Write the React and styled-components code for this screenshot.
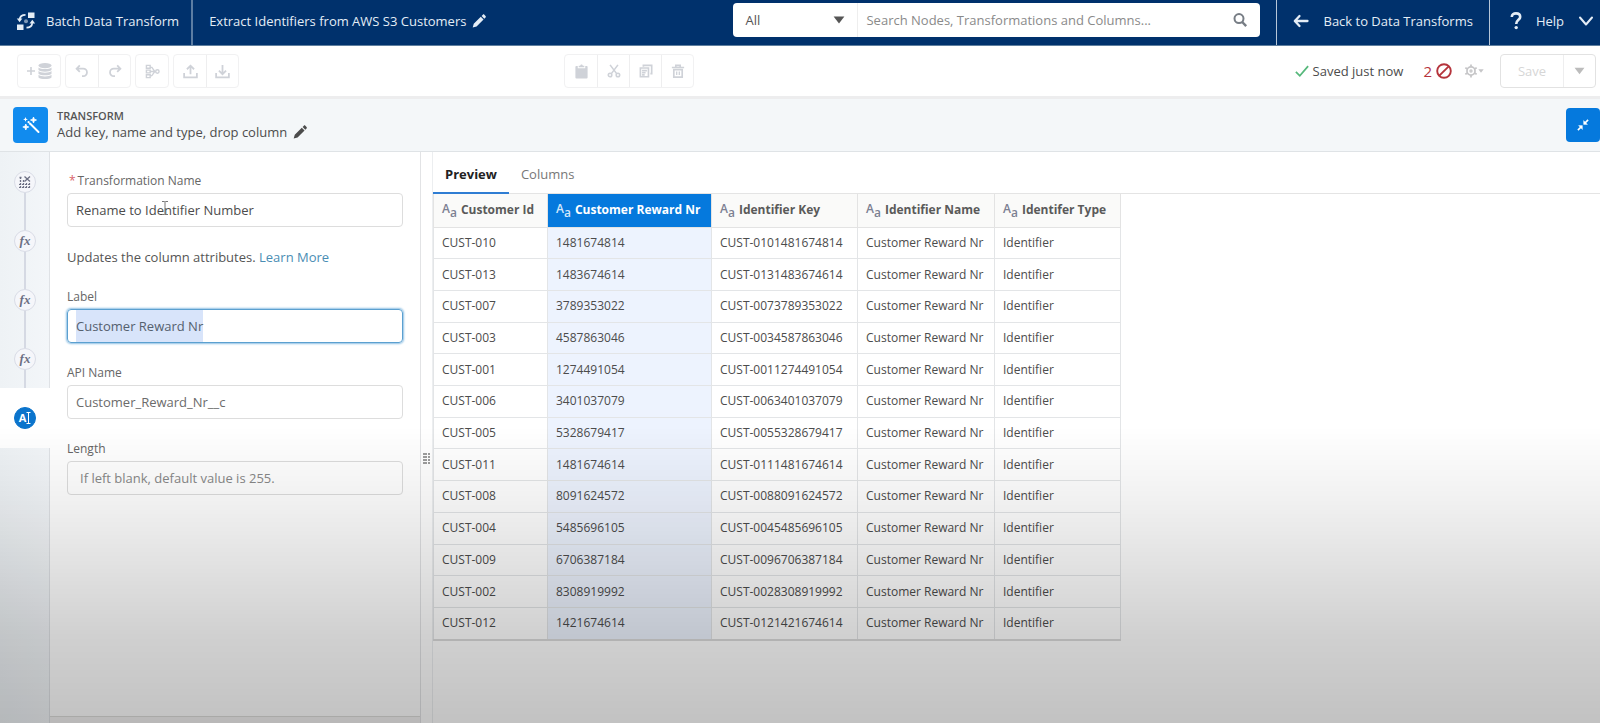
import { useEffect, useRef } from 'react';
import styled, { createGlobalStyle, css } from 'styled-components';

const GlobalStyle = createGlobalStyle`
  * {
    box-sizing: border-box;
  }

  body {
    margin: 0;
    background: #ffffff;
    color: #4c4c4c;
    font-family: 'Open Sans', 'Noto Sans', sans-serif;
    font-size: 13px;
    line-height: 20px;
  }

  button,
  input,
  select {
    font: inherit;
    color: inherit;
  }
`;

const Page = styled.div`
  display: flex;
  flex-direction: column;
  height: 100vh;
  overflow: hidden;
`;

const Shade = styled.div`
  position: fixed;
  inset: 0;
  pointer-events: none;
  background: linear-gradient(
    to bottom,
    rgba(0, 0, 0, 0) 59%,
    rgba(0, 0, 0, 0.055) 69%,
    rgba(0, 0, 0, 0.12) 79%,
    rgba(0, 0, 0, 0.185) 88%,
    rgba(0, 0, 0, 0.24) 100%
  );
`;

/* Header */

const Header = styled.header`
  display: flex;
  flex: none;
  height: 46px;
  background: #00316c;
  border-bottom: 1px solid #5f7f9f;
  color: #e4edf6;
`;

const Brand = styled.div`
  display: flex;
  align-items: center;
  gap: 10px;
  padding: 0 12px 3px 16px;
  border-right: 2px solid #5c7da3;
`;

const DocumentTitle = styled.div`
  display: flex;
  flex: 1;
  align-items: center;
  gap: 6px;
  padding: 0 16px 3px;
`;

const SearchBox = styled.form`
  display: flex;
  align-items: center;
  width: 527px;
  height: 34px;
  margin: 3px 16px 0 0;
  background: #ffffff;
  border-radius: 4px;
  color: #555555;
`;

const ScopeField = styled.label`
  display: flex;
  align-items: center;
  width: 125px;
  height: 34px;
  padding: 0 12px;
  border-right: 1px solid #eeeeee;
`;

const ScopeSelect = styled.select`
  flex: 1;
  padding: 0;
  border: none;
  background: none;
  appearance: none;
  outline: none;
`;

const SearchInput = styled.input`
  flex: 1;
  padding: 0 8px;
  border: none;
  background: none;
  outline: none;

  &::placeholder {
    color: #8a8a8a;
  }
`;

const SearchButton = styled.button`
  display: flex;
  padding: 0 12px;
  border: none;
  background: none;
  color: #777d85;
`;

const HeaderLink = styled.a`
  display: flex;
  align-items: center;
  gap: 14px;
  padding: 0 16px 3px;
  border-left: 1px solid #b6c6d8;
  color: inherit;
  text-decoration: none;
`;

const HelpButton = styled.button`
  display: flex;
  align-items: center;
  gap: 14px;
  padding: 0 6px 3px 20px;
  border: none;
  border-left: 1px solid #b6c6d8;
  background: none;
`;

/* Toolbar */

const Toolbar = styled.div`
  display: grid;
  grid-template-columns: 564px 1fr auto;
  align-items: center;
  flex: none;
  height: 50px;
  padding-right: 4px;
`;

const ToolGroups = styled.div`
  display: flex;
  gap: 4px;
  padding-left: 17px;
`;

const ButtonGroup = styled.div`
  display: flex;
  width: max-content;
  border: 1px solid #f1f1f2;
  border-radius: 4px;
`;

const ToolButton = styled.button`
  display: flex;
  align-items: center;
  justify-content: center;
  width: ${({ $wide }) => ($wide ? '42px' : '32px')};
  height: 32px;
  padding: 0;
  border: none;
  background: none;
  color: #cfd2d8;

  & + & {
    border-left: 1px solid #eeeeef;
  }
`;

const Status = styled.div`
  display: flex;
  align-items: center;
`;

const Saved = styled.span`
  display: flex;
  align-items: center;
  gap: 4px;
  margin-right: 20px;
`;

const Errors = styled.span`
  display: flex;
  align-items: center;
  gap: 4px;
  margin-right: 12px;
  color: #b5343c;
  font-size: 15px;
`;

const SettingsButton = styled.button`
  display: flex;
  align-items: center;
  margin-right: 16px;
  padding: 0;
  border: none;
  background: none;
  color: #c6c6c8;
`;

const SaveGroup = styled(ButtonGroup)`
  border-color: #e2e2e2;
`;

const SaveButton = styled(ToolButton)`
  width: ${({ $menu }) => ($menu ? '32px' : '62px')};
  color: ${({ $menu }) => ($menu ? '#bcbcbc' : '#d6d6d6')};
  border-left: ${({ $menu }) => ($menu ? '1px solid #e2e2e2' : 'none')};
`;

/* Transform title bar */

const TitleBar = styled.div`
  display: flex;
  align-items: center;
  flex: none;
  gap: 9px;
  height: 56px;
  padding-left: 13px;
  border-top: 3px solid #ededee;
  border-bottom: 1px solid #dfe3e6;
  background: #f4f7f9;
`;

const TransformIcon = styled.span`
  display: flex;
  align-items: center;
  justify-content: center;
  width: 35px;
  height: 36px;
  border-radius: 4px;
  background: #118bee;
  color: #ffffff;
`;

const TitleText = styled.div`
  flex: 1;
  padding-bottom: 3px;
  line-height: 17px;
`;

const Kicker = styled.h2`
  margin: 0;
  color: #555555;
  font-size: 11px;
  font-weight: 600;
  line-height: 17px;
`;

const TitleRow = styled.div`
  display: flex;
  align-items: center;
  gap: 6px;
`;

const CollapseButton = styled.button`
  display: flex;
  align-items: center;
  justify-content: center;
  width: 34px;
  height: 34px;
  padding: 0;
  border: none;
  border-radius: 4px;
  background: #0579dd;
  color: #ffffff;
`;

/* Body */

const Body = styled.main`
  display: flex;
  flex: 1;
  min-height: 0;
`;

const Rail = styled.nav`
  width: 50px;
  border-right: 1px solid #dfe2e6;
  background: linear-gradient(to right, #eef2f5, #f3f6f9);
`;

const Step = styled.button`
  display: flex;
  flex-direction: column;
  align-items: center;
  width: 50px;
  height: ${({ $active }) => ($active ? '60px' : '59px')};
  padding: 0;
  border: none;
  background: ${({ $active }) => ($active ? '#ffffff' : 'none')};

  &::before,
  &::after {
    content: '';
    flex: 1;
    width: 2px;
    background: ${({ $active }) => ($active ? 'none' : '#d5d9e3')};
  }

  &:first-child::before {
    background: none;
  }
`;

const StepCircle = styled.span`
  display: flex;
  align-items: center;
  justify-content: center;
  width: 22px;
  height: 22px;
  border: 1px solid #d9dce6;
  border-radius: 50%;
  background: #f5f6fa;
  color: #6d7084;
  font-family: 'Liberation Serif', serif;
  font-size: 13px;
  font-style: italic;
  font-weight: 700;

  ${({ $active }) =>
    $active &&
    css`
      border-color: #0b74cc;
      background: #0b74cc;
      color: #ffffff;
      font-family: 'Open Sans', sans-serif;
      font-size: 11px;
      font-style: normal;
    `}
`;

const FormPanel = styled.section`
  display: flex;
  flex-direction: column;
  width: 371px;
  border-right: 1px solid #e2e3e5;
`;

const Fields = styled.form`
  display: flex;
  flex: 1;
  flex-direction: column;
  gap: 20px;
  padding: 19px 17px 0;
`;

const PanelFooter = styled.div`
  height: 7px;
  border-top: 1px solid #dddddb;
  background: #f3f2f2;
`;

const Field = styled.div`
  position: relative;
  display: flex;
  flex-direction: column;
  gap: 2px;
`;

const FieldLabel = styled.label`
  color: #666666;
  font-size: 12px;
`;

const Required = styled.abbr`
  margin: 0 2px;
  color: #d9646a;
  text-decoration: none;
`;

const TextInput = styled.input`
  width: 100%;
  height: 34px;
  padding: 0 8px;
  border: 1px solid #dddddd;
  border-radius: 4px;
  background: #ffffff;
  color: ${({ $muted }) => ($muted ? '#6b6b6b' : 'inherit')};
  outline: none;

  &::placeholder {
    padding-left: 4px;
    color: #888888;
  }

  &::selection {
    background: #d8e4fa;
    color: #55606e;
  }

  &:focus {
    border-color: #5ba0d0;
    box-shadow: 0 0 2px 1px #8fc0e4;
  }
`;

/* selection band that fills the whole height of the box */
const SelectedInput = styled(TextInput)`
  background: linear-gradient(#d8e4fa, #d8e4fa) no-repeat 8px 0 / 127px 100%;
`;

const Hint = styled.p`
  margin: 0;
  color: #555555;

  a {
    color: #4a8db4;
    text-decoration: none;
  }
`;

const TextCursor = styled.svg`
  position: absolute;
  top: 30px;
  left: 94px;
`;

const Gutter = styled.div`
  display: flex;
  align-items: center;
  justify-content: center;
  width: 12px;
  border-right: 1px solid #eceef0;
  color: #858585;

  svg {
    margin-top: 44px;
  }
`;

const DataPanel = styled.section`
  flex: 1;
`;

const Tabs = styled.div`
  display: flex;
  height: 42px;
  border-bottom: 1px solid #e4e4e4;
`;

const Tab = styled.button`
  height: 42px;
  padding: 4px 12px 0;
  border: none;
  border-bottom: 2px solid ${({ $active }) => ($active ? '#2f7dd3' : 'transparent')};
  background: none;
  color: ${({ $active }) => ($active ? '#222222' : '#777777')};
  font-weight: ${({ $active }) => ($active ? 700 : 400)};
`;

const DataTable = styled.table`
  width: 688px;
  height: 447px;
  border-collapse: collapse;
  table-layout: fixed;
  border-bottom: 2px solid #dcdcdc;
  font-size: 12px;
  white-space: nowrap;
`;

const HeadCell = styled.th`
  height: 33px;
  padding: 0 8px;
  border: 1px solid #e3e3e3;
  border-top: none;
  background: ${({ $selected }) => ($selected ? '#0579dd' : '#fafaf9')};
  color: ${({ $selected }) => ($selected ? '#ffffff' : '#5a5a5a')};
  text-align: left;
  font-weight: 700;
`;

const HeadContent = styled.span`
  display: flex;
  align-items: center;
  gap: 4px;
`;

const TypeMark = styled.span`
  color: ${({ $selected }) => ($selected ? '#d3e8fb' : '#7c8092')};
  font-weight: 600;
  line-height: 16px;

  sub {
    font-size: 12px;
    line-height: 1;
    vertical-align: -4px;
  }
`;

const Cell = styled.td`
  padding: 0 8px;
  border: 1px solid #e3e5e7;
  background: ${({ $selected }) => ($selected ? '#edf3fe' : 'transparent')};
`;

/* Icons */

const Glyph = ({ size = 16, children, ...rest }) => (
  <svg width={size} height={size} viewBox='0 0 16 16' fill='none' stroke='currentColor' aria-hidden='true' {...rest}>
    {children}
  </svg>
);

const BatchIcon = () => (
  <svg width='20' height='20' viewBox='0 0 20 20' fill='none' stroke='currentColor' aria-hidden='true'>
    <path d='M12 1.500h6.500V7H12zM1 13.500h6.500V19H1z' fill='currentColor' stroke='none' />
    <path d='M9.500 3.800C6 3.800 4 5.500 3.600 8.500' strokeWidth='1.800' />
    <path d='M.8 7.500h5.600l-2.800 3.800z' fill='currentColor' stroke='none' />
    <path d='M10.500 16.700c3.500 0 5.400-1.600 5.800-4.500' strokeWidth='1.800' />
    <path d='M13.500 12.600h5.600l-2.800-3.800z' fill='currentColor' stroke='none' />
    <circle cx='10' cy='10.200' r='2' fill='currentColor' stroke='none' opacity='.55' />
  </svg>
);

const PencilIcon = () => (
  <Glyph size={14} fill='currentColor' stroke='none'>
    <path d='M.8 15.400 2 11.200 10 3.200l3.200 3.200-8 8zM11 2.200l1.400-1.400c.5-.5 1.200-.5 1.700 0l1.400 1.400c.5.5.5 1.200 0 1.700L14.100 5.300z' />
  </Glyph>
);

const Caret = ({ width = 12, height = 8 }) => (
  <svg width={width} height={height} viewBox='0 0 12 8' aria-hidden='true'>
    <path d='M.6.500h10.800L6 7.600z' fill='currentColor' />
  </svg>
);

const SearchIcon = () => (
  <Glyph strokeWidth='2'>
    <circle cx='7' cy='6.600' r='4.500' />
    <path d='m10.200 10 4 4.200' strokeWidth='2.400' />
  </Glyph>
);

const BackIcon = () => (
  <Glyph strokeWidth='2.300' strokeLinecap='round' strokeLinejoin='round'>
    <path d='M14.500 8H2M6.500 3 1.800 8l4.700 5' />
  </Glyph>
);

const HelpIcon = () => (
  <svg width='12' height='18' viewBox='0 0 12 18' fill='none' stroke='currentColor' aria-hidden='true'>
    <path d='M1.800 5c0-2.400 1.800-3.600 4.200-3.600s4.200 1.400 4.200 3.600c0 2.800-4 3-4 7' strokeWidth='2.600' />
    <circle cx='6.200' cy='15.600' r='1.700' fill='currentColor' stroke='none' />
  </svg>
);

const ChevronIcon = () => (
  <Glyph strokeWidth='2' strokeLinecap='round' strokeLinejoin='round'>
    <path d='m2 4.500 6 7 6-7' />
  </Glyph>
);

const AddDataIcon = () => (
  <svg width='26' height='18' viewBox='0 0 26 18' fill='currentColor' aria-hidden='true'>
    <path d='M1 9h8M5 5v8' stroke='currentColor' strokeWidth='1.600' />
    <ellipse cx='19' cy='3.600' rx='6.500' ry='2.600' />
    <path d='M12.500 5.400c2 2.200 11 2.200 13 0v2.600c-2 2.200-11 2.200-13 0zM12.500 9.100c2 2.200 11 2.200 13 0v2.600c-2 2.200-11 2.200-13 0zM12.500 12.800c2 2.200 11 2.200 13 0v2.600c-2 2.200-11 2.200-13 0z' />
  </svg>
);

const UndoIcon = () => (
  <Glyph size={14} strokeWidth='2'>
    <path d='M5.500 1.500 1.800 5.300l3.700 3.800M2 5.300h7.400a4.300 4.300 0 0 1 0 8.600H8' />
  </Glyph>
);

const RedoIcon = () => (
  <Glyph size={14} strokeWidth='2'>
    <path d='m10.500 1.500 3.700 3.800-3.700 3.800M14 5.300H6.600a4.300 4.300 0 0 0 0 8.600H8' />
  </Glyph>
);

const FlowIcon = () => (
  <Glyph size={15} strokeWidth='1.500'>
    <path d='M1.500 1.500h4v3h-4zM1.500 6.500h4v3h-4zM1.500 11.500h4v3h-4zM5.500 3c4 0 2.500 5 6 5M5.500 13c4 0 2.500-5 6-5M5.500 8h6' />
    <circle cx='13.200' cy='8' r='1.800' />
  </Glyph>
);

const UploadIcon = () => (
  <Glyph size={15} strokeWidth='1.900'>
    <path d='M8 11V2M4.200 5.600 8 1.800l3.800 3.800M1.200 9.500v4.700h13.600V9.500' />
  </Glyph>
);

const DownloadIcon = () => (
  <Glyph size={15} strokeWidth='1.900'>
    <path d='M8 1v9.500M4.200 7 8 10.800 11.800 7M1.200 9.500v4.700h13.600V9.500' />
  </Glyph>
);

const PasteIcon = () => (
  <Glyph size={15} stroke='none' fill='currentColor'>
    <path d='M2.500 2H4v2.500h8V2h1.500c.6 0 1 .4 1 1v11.500c0 .6-.4 1-1 1h-11c-.6 0-1-.4-1-1V3c0-.6.4-1 1-1z' />
    <path d='M5 3.500V1.800h1.600c.2-1.600 2.600-1.600 2.800 0H11v1.700z' />
  </Glyph>
);

const CutIcon = () => (
  <Glyph size={14} strokeWidth='1.800'>
    <path d='M3.500 1 11 11M12.500 1 5 11' />
    <circle cx='3.500' cy='12.600' r='2' />
    <circle cx='12.500' cy='12.600' r='2' />
  </Glyph>
);

const CopyIcon = () => (
  <Glyph size={14} strokeWidth='1.900'>
    <path d='M5 3V1.600h9.500V11H13' />
    <path d='M1.600 4.600h9.200v10H1.600z' />
    <path d='M3.500 7.500H9M3.500 10h4M3.500 12.400h3' />
  </Glyph>
);

const TrashIcon = () => (
  <Glyph size={14} strokeWidth='1.900'>
    <path d='M1 4h14M5.500 3.600V1.500h5v2.100' />
    <path d='M3.200 6.500h9.600v8.500H3.200z' />
    <path d='M6.500 8.500v4M9.500 8.500v4' strokeWidth='1.500' />
  </Glyph>
);

const CheckIcon = () => (
  <Glyph size={14} stroke='#56b87b' strokeWidth='2'>
    <path d='m1 9 4.500 4.500L15 2.500' />
  </Glyph>
);

const BanIcon = () => (
  <Glyph strokeWidth='1.900'>
    <circle cx='8' cy='8' r='6.800' />
    <path d='M12.700 3.300 3.300 12.700' />
  </Glyph>
);

const GearIcon = () => (
  <Glyph size={14} strokeWidth='2'>
    <circle cx='8' cy='8' r='4.600' />
    <circle cx='8' cy='8' r='1.200' strokeWidth='1.400' />
    <path d='M8 .500v3M8 12.500v3M1.500 4.200l2.600 1.500M11.900 10.300l2.600 1.500M14.500 4.200l-2.600 1.500M4.100 10.300l-2.600 1.500' />
  </Glyph>
);

const WandIcon = () => (
  <svg width='18' height='18' viewBox='0 0 18 18' fill='currentColor' aria-hidden='true'>
    <path d='m8 7.500 8.500 8.500' stroke='currentColor' strokeWidth='2' strokeLinecap='round' />
    <path
      d='m11.500 1 .8 2.200 2.200.8-2.200.8-.8 2.200-.8-2.200-2.200-.8 2.200-.8zM3.800 8l.8 2.200 2.200.8-2.200.8-.8 2.200-.8-2.200-2.200-.8 2.200-.8z'
      stroke='currentColor'
      strokeWidth='.8'
    />
    <path d='m3.500 1 .7 1.700 1.700.7-1.700.7-.7 1.700-.7-1.700-1.700-.7 1.700-.7z' />
    <circle cx='6.600' cy='6.200' r='1.100' />
  </svg>
);

const CollapseIcon = () => (
  <Glyph size={12} fill='currentColor' strokeWidth='2.200'>
    <path d='M8.800 2v5.200H14zM7.200 14V8.800H2z' strokeWidth='.5' />
    <path d='m10 6 4.800-4.800M6 10l-4.800 4.800' />
  </Glyph>
);

const GridIcon = () => (
  <svg width='12' height='12' viewBox='0 0 12 12' fill='none' stroke='currentColor' aria-hidden='true'>
    <path d='M1.500 1v11M.500 1.500h3M4.500 4v8' strokeWidth='1.300' strokeDasharray='2 1' />
    <path d='M7.500 7v5M10.500 7v5M0 11.500h12M0 8.500h12' strokeWidth='1.200' strokeDasharray='2 1' />
    <path d='m5.500.500 5.500 5M11 .500l-5.500 5' strokeWidth='1.300' />
  </svg>
);

const IBeamIcon = () => (
  <svg width='5' height='12' viewBox='0 0 5 12' aria-hidden='true'>
    <path d='M.500.500h4M.500 11.500h4M2.500.500v11' stroke='currentColor' fill='none' />
  </svg>
);

const GripIcon = () => (
  <svg width='7' height='13' viewBox='0 0 7 13' fill='currentColor' aria-hidden='true'>
    {[0, 3, 6, 9].map((y) => [0, 2, 5].map((x) => <rect key={`${x}-${y}`} x={x} y={y} width='2' height='2' opacity='.8' />))}
  </svg>
);

const columns = ['Customer Id', 'Customer Reward Nr', 'Identifier Key', 'Identifier Name', 'Identifer Type'];
const columnWidths = [114, 164, 146, 137, 126];
const selectedColumn = 1;

const customers = [
  ['010', '1481674814'],
  ['013', '1483674614'],
  ['007', '3789353022'],
  ['003', '4587863046'],
  ['001', '1274491054'],
  ['006', '3401037079'],
  ['005', '5328679417'],
  ['011', '1481674614'],
  ['008', '8091624572'],
  ['004', '5485696105'],
  ['009', '6706387184'],
  ['002', '8308919992'],
  ['012', '1421674614'],
];

const rows = customers.map(([id, reward]) => [
  `CUST-${id}`,
  reward,
  `CUST-${id}${reward}`,
  'Customer Reward Nr',
  'Identifier',
]);

const PageHeader = () => (
  <Header>
    <Brand>
      <BatchIcon />
      Batch Data Transform
    </Brand>
    <DocumentTitle>
      Extract Identifiers from AWS S3 Customers
      <PencilIcon />
    </DocumentTitle>
    <SearchBox>
      <ScopeField>
        <ScopeSelect aria-label='Search scope'>
          <option>All</option>
        </ScopeSelect>
        <Caret />
      </ScopeField>
      <SearchInput aria-label='Search' placeholder='Search Nodes, Transformations and Columns...' />
      <SearchButton type='button' aria-label='Search'>
        <SearchIcon />
      </SearchButton>
    </SearchBox>
    <HeaderLink href='#'>
      <BackIcon />
      Back to Data Transforms
    </HeaderLink>
    <HelpButton type='button'>
      <HelpIcon />
      Help
      <ChevronIcon />
    </HelpButton>
  </Header>
);

const PageToolbar = () => (
  <Toolbar>
    <ToolGroups>
      <ButtonGroup>
        <ToolButton $wide aria-label='Add data'><AddDataIcon /></ToolButton>
      </ButtonGroup>
      <ButtonGroup>
        <ToolButton aria-label='Undo'><UndoIcon /></ToolButton>
        <ToolButton aria-label='Redo'><RedoIcon /></ToolButton>
      </ButtonGroup>
      <ButtonGroup>
        <ToolButton aria-label='Layout'><FlowIcon /></ToolButton>
      </ButtonGroup>
      <ButtonGroup>
        <ToolButton aria-label='Upload'><UploadIcon /></ToolButton>
        <ToolButton aria-label='Download'><DownloadIcon /></ToolButton>
      </ButtonGroup>
    </ToolGroups>
    <ButtonGroup>
      <ToolButton aria-label='Paste'><PasteIcon /></ToolButton>
      <ToolButton aria-label='Cut'><CutIcon /></ToolButton>
      <ToolButton aria-label='Copy'><CopyIcon /></ToolButton>
      <ToolButton aria-label='Delete'><TrashIcon /></ToolButton>
    </ButtonGroup>
    <Status>
      <Saved>
        <CheckIcon />
        Saved just now
      </Saved>
      <Errors>
        2
        <BanIcon />
      </Errors>
      <SettingsButton aria-label='Settings'>
        <GearIcon />
        <Caret width={6} height={4} />
      </SettingsButton>
      <SaveGroup>
        <SaveButton>Save</SaveButton>
        <SaveButton $menu aria-label='More save options'><Caret width={11} height={8} /></SaveButton>
      </SaveGroup>
    </Status>
  </Toolbar>
);

const TransformForm = () => {
  const labelInput = useRef(null);

  useEffect(() => {
    labelInput.current.focus();
    labelInput.current.select();
  }, []);

  return (
    <FormPanel>
      <Fields>
        <Field>
          <FieldLabel htmlFor='name'>
            <Required>*</Required>
            Transformation Name
          </FieldLabel>
          <TextInput id='name' defaultValue='Rename to Identifier Number' />
          <TextCursor width='8' height='14' viewBox='0 0 8 14' fill='none' stroke='#777777'>
            <path d='M1 .500h2.500l.5.500.5-.500H7M1 13.500h2.500L4 13l.5.500H7M4 1v12' />
          </TextCursor>
        </Field>
        <Hint>
          Updates the column attributes. <a href='#'>Learn More</a>
        </Hint>
        <Field>
          <FieldLabel htmlFor='label'>Label</FieldLabel>
          <SelectedInput id='label' ref={labelInput} defaultValue='Customer Reward Nr' />
        </Field>
        <Field>
          <FieldLabel htmlFor='api-name'>API Name</FieldLabel>
          <TextInput id='api-name' $muted defaultValue='Customer_Reward_Nr__c' />
        </Field>
        <Field>
          <FieldLabel htmlFor='length'>Length</FieldLabel>
          <TextInput id='length' placeholder='If left blank, default value is 255.' />
        </Field>
      </Fields>
      <PanelFooter />
    </FormPanel>
  );
};

const PreviewTable = () => (
  <DataTable>
    <colgroup>
      {columnWidths.map((width, i) => (
        <col key={i} width={width} />
      ))}
    </colgroup>
    <thead>
      <tr>
        {columns.map((name, i) => (
          <HeadCell key={name} $selected={i === selectedColumn}>
            <HeadContent>
              <TypeMark $selected={i === selectedColumn}>
                A<sub>a</sub>
              </TypeMark>
              {name}
            </HeadContent>
          </HeadCell>
        ))}
      </tr>
    </thead>
    <tbody>
      {rows.map((row) => (
        <tr key={row[0]}>
          {row.map((value, i) => (
            <Cell key={i} $selected={i === selectedColumn}>
              {value}
            </Cell>
          ))}
        </tr>
      ))}
    </tbody>
  </DataTable>
);

const App = () => (
  <>
    <GlobalStyle />
    <Page>
      <PageHeader />
      <PageToolbar />
      <TitleBar>
        <TransformIcon>
          <WandIcon />
        </TransformIcon>
        <TitleText>
          <Kicker>TRANSFORM</Kicker>
          <TitleRow>
            Add key, name and type, drop column
            <PencilIcon />
          </TitleRow>
        </TitleText>
        <CollapseButton aria-label='Collapse'>
          <CollapseIcon />
        </CollapseButton>
      </TitleBar>
      <Body>
        <Rail>
          <Step aria-label='Drop columns'>
            <StepCircle><GridIcon /></StepCircle>
          </Step>
          <Step><StepCircle>fx</StepCircle></Step>
          <Step><StepCircle>fx</StepCircle></Step>
          <Step><StepCircle>fx</StepCircle></Step>
          <Step $active>
            <StepCircle $active>
              A<IBeamIcon />
            </StepCircle>
          </Step>
        </Rail>
        <TransformForm />
        <Gutter>
          <GripIcon />
        </Gutter>
        <DataPanel>
          <Tabs>
            <Tab $active>Preview</Tab>
            <Tab>Columns</Tab>
          </Tabs>
          <PreviewTable />
        </DataPanel>
      </Body>
    </Page>
    <Shade />
  </>
);

export default App;
